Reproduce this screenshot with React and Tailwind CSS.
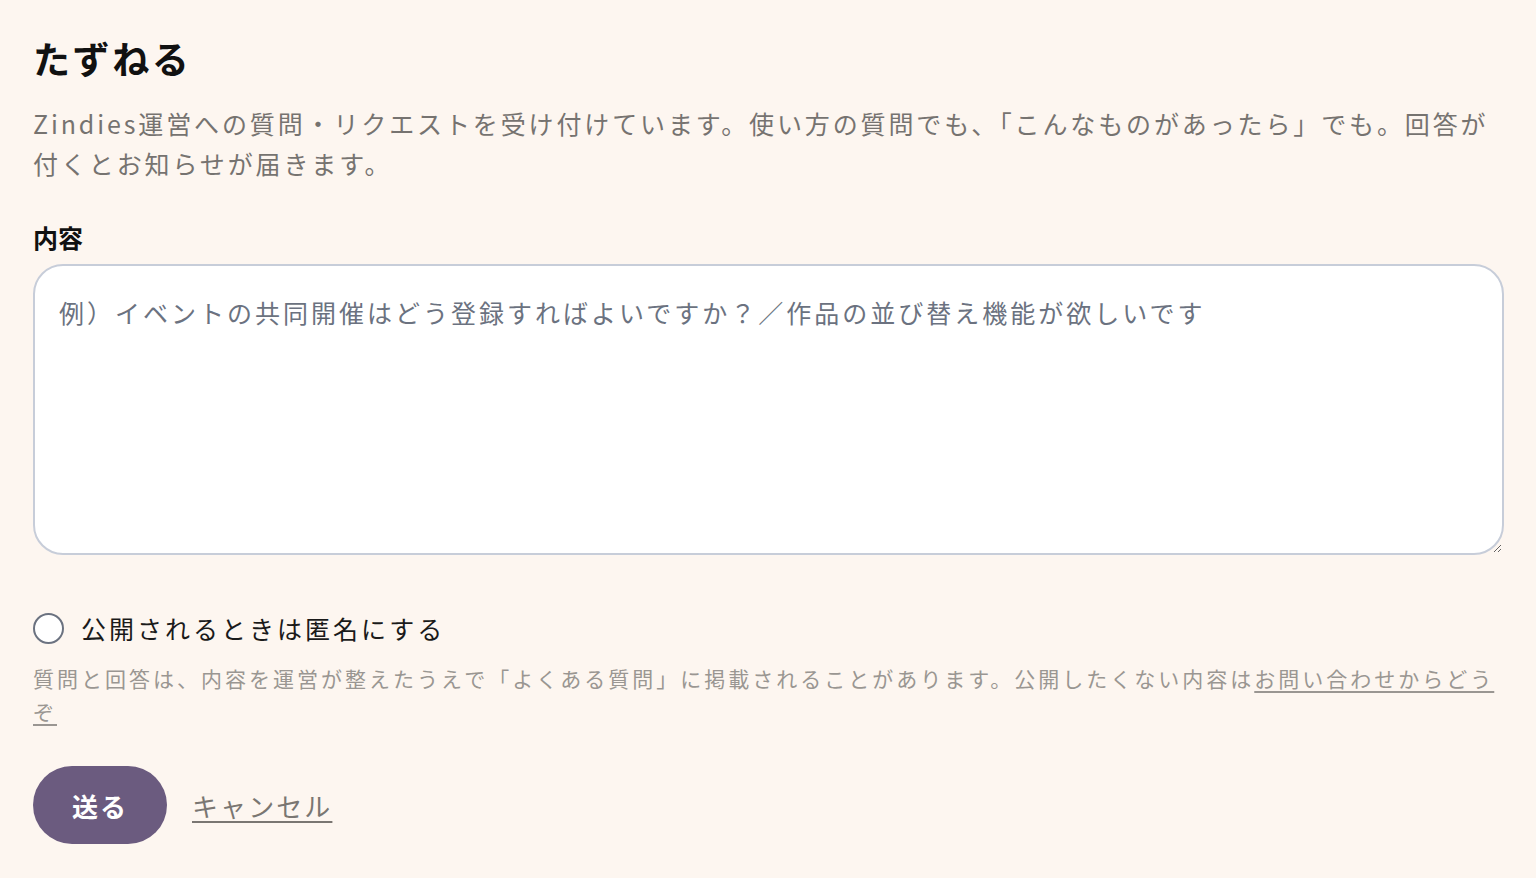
const font = "font-['Noto_Sans_CJK_JP','Noto_Sans',sans-serif]";

const App = () => {
    return (
        <div className={`w-full min-h-screen bg-[#fdf6f0] ${font}`}>
            <div className="px-[33px] pt-[32px] pb-8">
                <h1 className="text-[37px] font-bold leading-[52px] tracking-[0.07em] text-[#111]">たずねる</h1>
                <p className="mt-[19px] text-[25px] leading-[40px] tracking-[0.115em] text-[#767370]">
                    Zindies運営への質問・リクエストを受け付けています。使い方の質問でも、「こんなものがあったら」でも。回答が付くとお知らせが届きます。
                </p>
                <label className="block mt-[36px] text-[25px] font-bold leading-[36px] text-[#111]">内容</label>
                <textarea
                    className="mt-[9px] block w-[1471px] h-[291px] bg-white border-2 border-[#c7cdd9] rounded-[30px] px-[24px] py-[28px] text-[25px] leading-[36px] tracking-[0.12em] outline-none placeholder:text-[#6b7280]"
                    placeholder="例）イベントの共同開催はどう登録すればよいですか？／作品の並び替え機能が欲しいです"
                />
                <label className="mt-[55px] flex items-center gap-[17px]">
                    <span className="w-[31px] h-[31px] rounded-full border-2 border-[#6b7280] bg-white"></span>
                    <span className="text-[25px] leading-[36px] tracking-[0.12em] text-[#1a1a1a]">公開されるときは匿名にする</span>
                </label>
                <p className="mt-[16px] text-[21px] leading-[33px] tracking-[3px] text-[#9a9692]">
                    質問と回答は、内容を運営が整えたうえで「よくある質問」に掲載されることがあります。公開したくない内容は
                    <a className="underline underline-offset-[4px]" href="#">お問い合わせからどうぞ</a>
                </p>
                <div className="mt-[38px] flex items-center gap-[25px]">
                    <button className="w-[134px] h-[78px] rounded-full bg-[#6b5b7f] text-white text-[26px] font-bold tracking-[0.08em]">送る</button>
                    <a className="text-[26px] tracking-[0.08em] text-[#7a7672] underline underline-offset-[4px]" href="#">キャンセル</a>
                </div>
            </div>
        </div>
    );
};

export default App;
